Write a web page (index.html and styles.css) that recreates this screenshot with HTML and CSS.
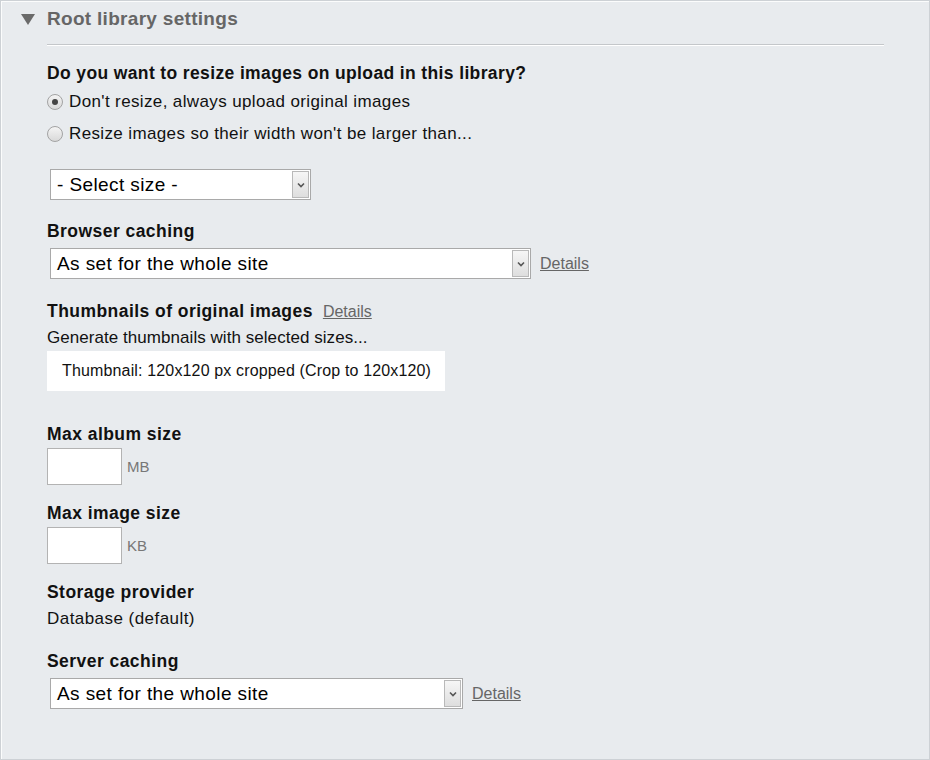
FILE: index.html
```html
<!DOCTYPE html>
<html>
<head>
<meta charset="utf-8">
<link rel="stylesheet" href="styles.css">
</head>
<body>
<div class="frame">
  <div class="header">
    <svg class="tri" width="14" height="11" viewBox="0 0 14 11"><polygon points="0,0 14,0 7,11" fill="#6a6a6a"/></svg>
    <span class="title">Root library settings</span>
  </div>
  <div class="content">
    <div class="divider"></div>

    <div class="question">Do you want to resize images on upload in this library?</div>
    <div class="radio-row first"><span class="radio checked"></span><span>Don't resize, always upload original images</span></div>
    <div class="radio-row second"><span class="radio"></span><span>Resize images so their width won't be larger than...</span></div>

    <div class="select size-select">
      <span class="select-text">- Select size -</span>
      <span class="select-btn"><svg width="8" height="6" viewBox="0 0 8 6"><polyline points="1,1.5 4,4.5 7,1.5" fill="none" stroke="#555" stroke-width="1.6"/></svg></span>
    </div>

    <div class="label gap-a">Browser caching</div>
    <div class="select-row">
      <div class="select wide">
        <span class="select-text">As set for the whole site</span>
        <span class="select-btn"><svg width="8" height="6" viewBox="0 0 8 6"><polyline points="1,1.5 4,4.5 7,1.5" fill="none" stroke="#555" stroke-width="1.6"/></svg></span>
      </div>
      <a class="details">Details</a>
    </div>

    <div class="label-row gap-b"><span class="label">Thumbnails of original images</span><a class="details inline">Details</a></div>
    <div class="text tight gap-c">Generate thumbnails with selected sizes...</div>
    <div class="thumb-box">Thumbnail: 120x120 px cropped (Crop to 120x120)</div>

    <div class="label gap-d">Max album size</div>
    <div class="input-row"><span class="input"></span><span class="unit">MB</span></div>

    <div class="label gap-e">Max image size</div>
    <div class="input-row"><span class="input"></span><span class="unit">KB</span></div>

    <div class="label gap-e">Storage provider</div>
    <div class="text loose gap-c">Database (default)</div>

    <div class="label gap-b">Server caching</div>
    <div class="select-row">
      <div class="select medium">
        <span class="select-text">As set for the whole site</span>
        <span class="select-btn"><svg width="8" height="6" viewBox="0 0 8 6"><polyline points="1,1.5 4,4.5 7,1.5" fill="none" stroke="#555" stroke-width="1.6"/></svg></span>
      </div>
      <a class="details">Details</a>
    </div>
  </div>
</div>
</body>
</html>
```
FILE: styles.css
```css
html, body {
  margin: 0;
  padding: 0;
}
body {
  font-family: "Liberation Sans", Arial, sans-serif;
  color: #111;
  background: #e8ebee;
}
.frame {
  width: 930px;
  height: 760px;
  box-sizing: border-box;
  border: 1px solid #cdd1d5;
  box-shadow: inset 1px 1px 0 #fbfcfc;
  background: #e8ebee;
  overflow: hidden;
}
.header {
  display: flex;
  align-items: center;
  padding: 7px 0 0 20px;
  height: 22px;
}
.tri {
  display: block;
  margin-right: 12px;
}
.title {
  font-size: 19px;
  line-height: 22px;
  letter-spacing: 0.3px;
  font-weight: bold;
  color: #666;
}
.content {
  margin-left: 46px;
  width: 837px;
}
.divider {
  margin-top: 14px;
  height: 0;
  border-top: 1px solid #c4c7ca;
  border-bottom: 1px solid #fff;
}
.question {
  margin-top: 17px;
  font-size: 17.5px;
  line-height: 20px;
  letter-spacing: 0.37px;
  font-weight: bold;
}
.radio-row {
  display: flex;
  align-items: center;
  font-size: 17px;
  line-height: 20px;
  letter-spacing: 0.37px;
  gap: 6px;
}
.radio-row.first { margin-top: 9px; }
.radio-row.second { margin-top: 12px; }
.radio {
  width: 16px;
  height: 16px;
  flex: none;
  box-sizing: border-box;
  border-radius: 50%;
  border: 1px solid #a3a3a3;
  background: linear-gradient(#f4f4f4, #d9d9d9);
  position: relative;
}
.radio.checked::after {
  content: "";
  position: absolute;
  left: 4px;
  top: 4px;
  width: 6px;
  height: 6px;
  border-radius: 50%;
  background: #444;
}
.select {
  display: flex;
  align-items: center;
  justify-content: space-between;
  height: 31px;
  box-sizing: border-box;
  border: 1px solid #a9a9a9;
  background: #fff;
  padding: 1px;
}
.size-select {
  margin-top: 25px;
  margin-left: 3px;
  width: 261px;
}
.select.wide { width: 481px; }
.select.medium { width: 413px; }
.select-text {
  font-size: 19px;
  letter-spacing: 0.4px;
  padding-left: 5px;
  color: #000;
}
.select-btn {
  width: 17px;
  height: 100%;
  box-sizing: border-box;
  border: 1px solid #b9b9b9;
  background: linear-gradient(#f6f6f6, #dedede);
  display: flex;
  align-items: center;
  justify-content: center;
}
.select-row {
  display: flex;
  align-items: center;
  margin-top: 7px;
  margin-left: 3px;
}
.details {
  font-size: 16px;
  color: #666;
  text-decoration: underline;
  margin-left: 9px;
}
.label-row {
  display: flex;
  align-items: baseline;
}
.details.inline {
  margin-left: 10px;
}
.label {
  font-size: 17.5px;
  line-height: 20px;
  letter-spacing: 0.45px;
  font-weight: bold;
}
.text {
  font-size: 17px;
  line-height: 20px;
  letter-spacing: 0.3px;
}
.text.tight { letter-spacing: 0.05px; }
.text.loose { letter-spacing: 0.45px; }
.gap-a { margin-top: 21px; }
.gap-b { margin-top: 22px; }
.gap-c { margin-top: 7px; }
.gap-d { margin-top: 33px; }
.gap-e { margin-top: 18px; }
.thumb-box {
  margin-top: 3px;
  width: 398px;
  height: 40px;
  box-sizing: border-box;
  background: #fff;
  padding-left: 15px;
  font-size: 16px;
  letter-spacing: 0.15px;
  line-height: 40px;
  color: #111;
  white-space: nowrap;
}
.input-row {
  display: flex;
  align-items: center;
  margin-top: 4px;
  gap: 5px;
}
.input {
  display: block;
  width: 75px;
  height: 37px;
  box-sizing: border-box;
  border: 1px solid #b3b3b3;
  background: #fff;
}
.unit {
  font-size: 15px;
  color: #777;
}
```
